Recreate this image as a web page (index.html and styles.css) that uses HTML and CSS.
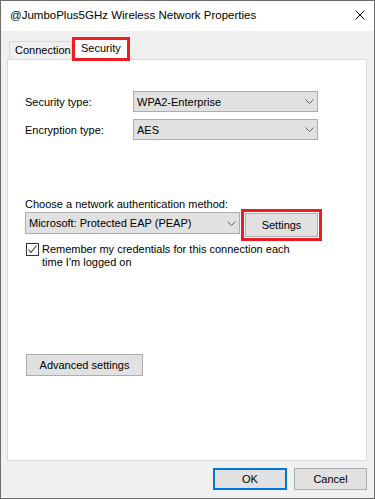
FILE: index.html
```html
<!DOCTYPE html>
<html lang="en">
<head>
    <meta charset="UTF-8">
    <meta name="viewport" content="width=device-width, initial-scale=1.0">
    <title>@JumboPlus5GHz Wireless Network Properties</title>
    <link rel="stylesheet" href="styles.css">
</head>
<body>

    <div class="window">
        <div class="titlebar">
            <span class="title">@JumboPlus5GHz Wireless Network Properties</span>
            <svg class="close" width="10" height="10" viewBox="0 0 10 10">
                <path d="M0.5 0.5 L9.5 9.5 M9.5 0.5 L0.5 9.5" stroke="#000" stroke-width="1" fill="none"/>
            </svg>
        </div>

        <div class="dialog">
            <div class="tabs">
                <div class="tab">Connection</div>
                <div class="tab tab-active">Security</div>
            </div>

            <div class="panel">
                <div class="field">
                    <span class="label">Security type:</span>
                    <div class="combo combo-wide">
                        <span>WPA2-Enterprise</span>
                        <svg class="chevron" width="9" height="5" viewBox="0 0 9 5"><polyline points="0.5,0.5 4.5,4.5 8.5,0.5" stroke="#606060" fill="none"/></svg>
                    </div>
                </div>
                <div class="field">
                    <span class="label">Encryption type:</span>
                    <div class="combo combo-wide">
                        <span>AES</span>
                        <svg class="chevron" width="9" height="5" viewBox="0 0 9 5"><polyline points="0.5,0.5 4.5,4.5 8.5,0.5" stroke="#606060" fill="none"/></svg>
                    </div>
                </div>

                <div class="auth-label">Choose a network authentication method:</div>
                <div class="auth-row">
                    <div class="combo combo-auth">
                        <span>Microsoft: Protected EAP (PEAP)</span>
                        <svg class="chevron" width="9" height="5" viewBox="0 0 9 5"><polyline points="0.5,0.5 4.5,4.5 8.5,0.5" stroke="#606060" fill="none"/></svg>
                    </div>
                    <div class="highlight">
                        <div class="button settings-btn">Settings</div>
                    </div>
                </div>

                <div class="check-row">
                    <span class="checkbox">
                        <svg width="11" height="11" viewBox="0 0 11 11"><polyline points="1.5,5.5 4,8.5 9.5,1.5" stroke="#333" stroke-width="1.1" fill="none"/></svg>
                    </span>
                    <span class="check-text">Remember my credentials for this connection each<br>time I'm logged on</span>
                </div>

                <div class="button advanced-btn">Advanced settings</div>
            </div>

            <div class="footer">
                <div class="button ok-btn">OK</div>
                <div class="button cancel-btn">Cancel</div>
            </div>
        </div>
    </div>

</body>
</html>
```

FILE: styles.css
```css
body {
    margin: 0;
    font-family: "Liberation Sans", Arial, sans-serif;
    font-size: 11px;
    color: #000;
}

.window {
    width: 375px;
    height: 499px;
    box-sizing: border-box;
    border: 1px solid #6d6d6d;
    background: #f0f0f0;
    display: flex;
    flex-direction: column;
}

.titlebar {
    height: 30px;
    background: #fff;
    display: flex;
    align-items: center;
    justify-content: space-between;
    padding: 0 9px;
}

.title {
    font-size: 11.5px;
    line-height: 15px;
    margin-bottom: 1px;
}

.close {
    margin-bottom: 3px;
}

.dialog {
    flex: 1;
    padding: 6px 7px 0 6px;
}

.tabs {
    display: flex;
    align-items: flex-start;
    height: 22px;
    padding-left: 2px;
}

.tab {
    margin-top: 4px;
    width: 63px;
    height: 18px;
    box-sizing: border-box;
    border: 1px solid #d9d9d9;
    border-bottom: none;
    padding-left: 5px;
    line-height: 17px;
    background: #f0f0f0;
}

.tab-active {
    margin-top: 0;
    width: 58px;
    height: 24px;
    border: 3px solid #ec1c24;
    padding-left: 6px;
    line-height: 17px;
    background: #fff;
    position: relative;
    z-index: 1;
}

.panel {
    height: 402px;
    box-sizing: border-box;
    border: 1px solid #d9d9d9;
    background: #fff;
    padding: 31px 17px 0 17px;
}

.field {
    display: flex;
    align-items: center;
    height: 21px;
}

.field + .field {
    margin-top: 7px;
}

.label {
    width: 108px;
}

.combo {
    height: 21px;
    box-sizing: border-box;
    border: 1px solid #adadad;
    background: #e1e1e1;
    display: flex;
    align-items: center;
    justify-content: space-between;
    padding: 0 3px;
}

.combo-wide {
    width: 185px;
}

.auth-label {
    margin-top: 57px;
    line-height: 15px;
}

.auth-row {
    display: flex;
    align-items: flex-start;
}

.combo-auth {
    width: 215px;
    height: 22px;
}

.highlight {
    margin-top: -3px;
    margin-left: 1px;
    width: 81px;
    height: 32px;
    box-sizing: border-box;
    border: 3px solid #ec1c24;
    padding: 1px;
}

.button {
    box-sizing: border-box;
    border: 1px solid #adadad;
    background: #e1e1e1;
    display: flex;
    align-items: center;
    justify-content: center;
}

.settings-btn {
    height: 24px;
}

.check-row {
    display: flex;
    align-items: flex-start;
    margin-top: 2px;
}

.checkbox {
    width: 13px;
    height: 13px;
    box-sizing: border-box;
    border: 1px solid #333;
    margin-left: 1px;
    display: flex;
}

.check-text {
    margin-left: 3px;
    line-height: 13px;
}

.advanced-btn {
    margin-top: 85px;
    margin-left: 1px;
    width: 117px;
    height: 22px;
}

.footer {
    display: flex;
    justify-content: flex-end;
    gap: 7px;
    margin-top: 7px;
}

.ok-btn {
    width: 74px;
    height: 22px;
    border: 2px solid #0078d7;
}

.cancel-btn {
    width: 73px;
    height: 22px;
}
```
